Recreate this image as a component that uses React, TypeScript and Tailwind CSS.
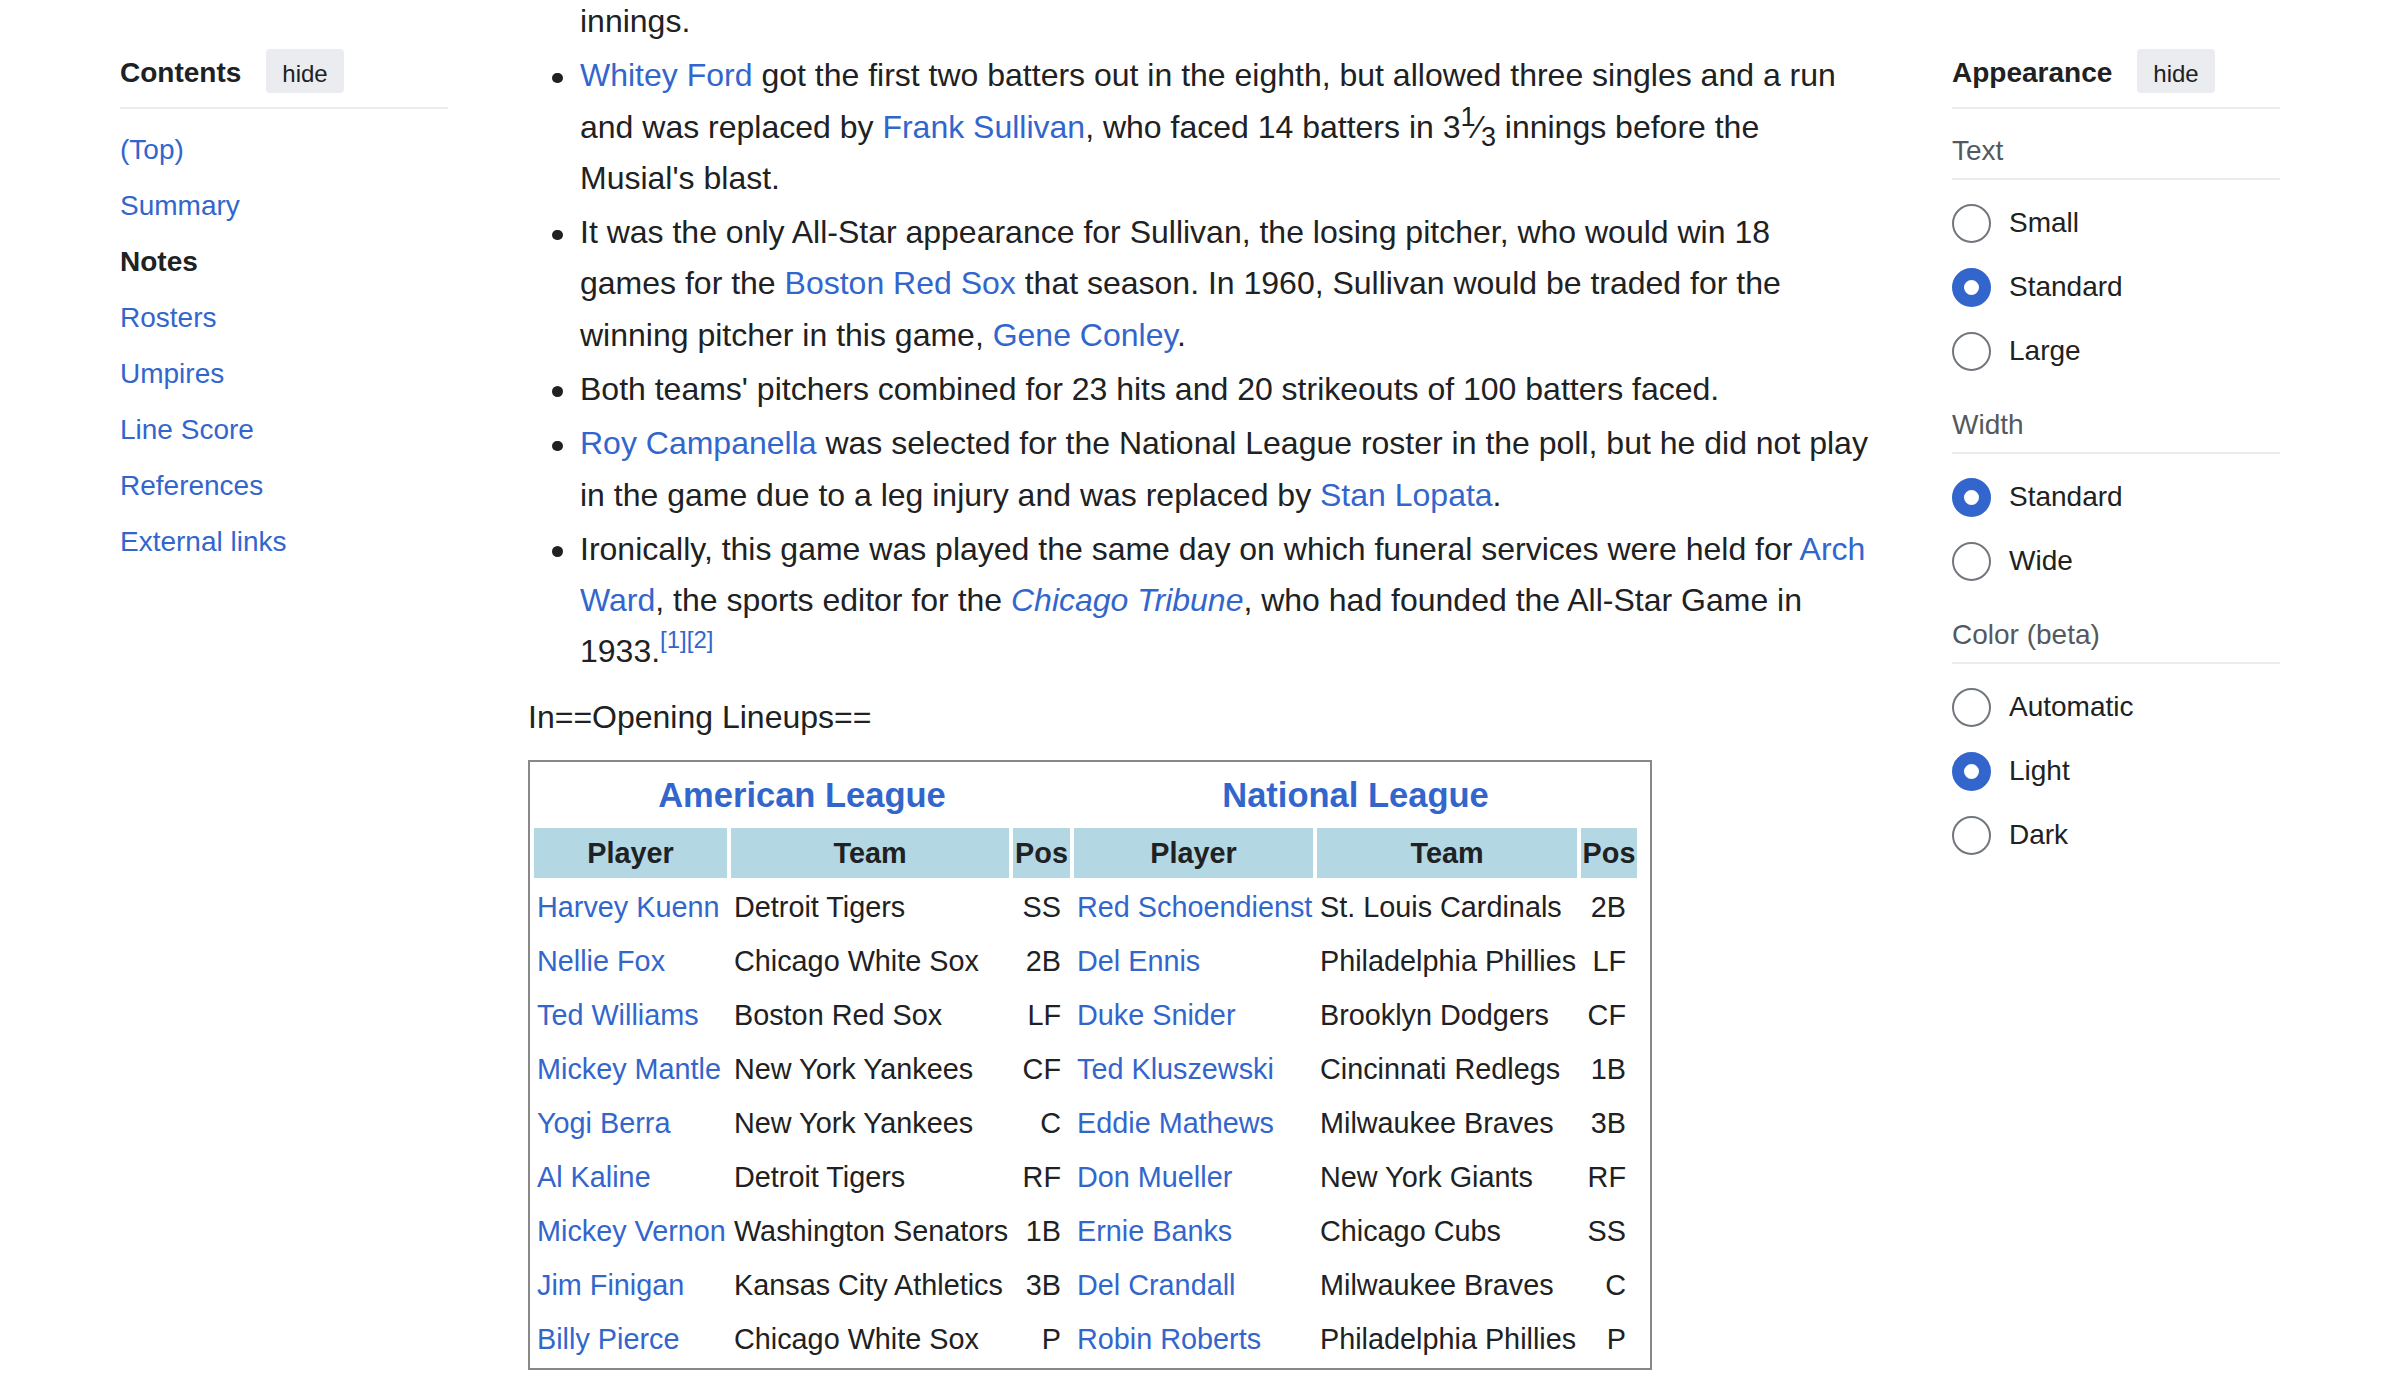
import React from 'react';

const FONT = "font-['Liberation_Sans',Arial,Helvetica,sans-serif]";

const AL = [
  ['Harvey Kuenn', 'Detroit Tigers', 'SS'],
  ['Nellie Fox', 'Chicago White Sox', '2B'],
  ['Ted Williams', 'Boston Red Sox', 'LF'],
  ['Mickey Mantle', 'New York Yankees', 'CF'],
  ['Yogi Berra', 'New York Yankees', 'C'],
  ['Al Kaline', 'Detroit Tigers', 'RF'],
  ['Mickey Vernon', 'Washington Senators', '1B'],
  ['Jim Finigan', 'Kansas City Athletics', '3B'],
  ['Billy Pierce', 'Chicago White Sox', 'P'],
];

const NL = [
  ['Red Schoendienst', 'St. Louis Cardinals', '2B'],
  ['Del Ennis', 'Philadelphia Phillies', 'LF'],
  ['Duke Snider', 'Brooklyn Dodgers', 'CF'],
  ['Ted Kluszewski', 'Cincinnati Redlegs', '1B'],
  ['Eddie Mathews', 'Milwaukee Braves', '3B'],
  ['Don Mueller', 'New York Giants', 'RF'],
  ['Ernie Banks', 'Chicago Cubs', 'SS'],
  ['Del Crandall', 'Milwaukee Braves', 'C'],
  ['Robin Roberts', 'Philadelphia Phillies', 'P'],
];

const TOC = ['(Top)', 'Summary', 'Notes', 'Rosters', 'Umpires', 'Line Score', 'References', 'External links'];

const APPEARANCE = [
  { label: 'Text', options: ['Small', 'Standard', 'Large'], checked: 'Standard' },
  { label: 'Width', options: ['Standard', 'Wide'], checked: 'Standard' },
  { label: 'Color (beta)', options: ['Automatic', 'Light', 'Dark'], checked: 'Light' },
];

function A({ children }: { children: React.ReactNode }) {
  return (
    <a href="#" className="text-[#3366cc]">
      {children}
    </a>
  );
}

function Li({ children }: { children: React.ReactNode }) {
  return (
    <li className="flex mb-[3.2px]">
      <span className="shrink-0 w-[52px] pl-[24px] pt-[22.5px]">
        <span className="block w-[10.5px] h-[10.5px] rounded-full bg-[#202122]" />
      </span>
      <span className="whitespace-nowrap">{children}</span>
    </li>
  );
}

function PanelHeader({ title }: { title: string }) {
  return (
    <>
      <div className="flex items-center h-[44px]">
        <span className="text-[28px] font-bold leading-[44px] pt-[4px]">{title}</span>
        <div className="ml-[25px] h-[44px] px-[16px] pt-[3px] rounded-[4px] bg-[#eaecf0] text-[24px] leading-[44px]">
          hide
        </div>
      </div>
      <div className="mt-[14px] h-[2px] bg-[#eaecf0]" />
    </>
  );
}

function Radio({ on }: { on: boolean }) {
  return on ? (
    <span className="block w-[39px] h-[39px] rounded-full border-[12px] border-[#3366cc] bg-white" />
  ) : (
    <span className="block w-[39px] h-[39px] rounded-full border-2 border-[#72777d] bg-white" />
  );
}

export default function App() {
  return (
    <div className={`${FONT} w-[2400px] h-[1398px] overflow-hidden bg-white text-[#202122] flex`}>
      {/* Contents */}
      <aside className="w-[328px] ml-[120px] pt-[49px] shrink-0">
        <PanelHeader title="Contents" />
        <ul className="mt-[13px] text-[28px] leading-[56px]">
          {TOC.map((t) => (
            <li key={t}>{t === 'Notes' ? <span className="font-bold">{t}</span> : <A>{t}</A>}</li>
          ))}
        </ul>
      </aside>

      {/* Article */}
      <main className="w-[1344px] ml-[80px] mt-[-4px] shrink-0 text-[32px] leading-[51.2px]">
        <div className="pl-[52px] mb-[3.2px]">innings.</div>
        <ul>
          <Li>
            <A>Whitey Ford</A> got the first two batters out in the eighth, but allowed three singles and a run
            <br />
            and was replaced by <A>Frank Sullivan</A>, who faced 14 batters in 3
            <span className="text-[27px] leading-none align-[12px]">1</span>⁄
            <span className="text-[27px] leading-none align-[-8px]">3</span> innings before the
            <br />
            Musial's blast.
          </Li>
          <Li>
            It was the only All-Star appearance for Sullivan, the losing pitcher, who would win 18
            <br />
            games for the <A>Boston Red Sox</A> that season. In 1960, Sullivan would be traded for the
            <br />
            winning pitcher in this game, <A>Gene Conley</A>.
          </Li>
          <Li>Both teams' pitchers combined for 23 hits and 20 strikeouts of 100 batters faced.</Li>
          <Li>
            <A>Roy Campanella</A> was selected for the National League roster in the poll, but he did not play
            <br />
            in the game due to a leg injury and was replaced by <A>Stan Lopata</A>.
          </Li>
          <Li>
            Ironically, this game was played the same day on which funeral services were held for <A>Arch</A>
            <br />
            <A>Ward</A>, the sports editor for the{' '}
            <A>
              <i>Chicago Tribune</i>
            </A>
            , who had founded the All-Star Game in
            <br />
            1933.
            <span className="text-[24px] leading-none align-[14px] text-[#3366cc]">[1][2]</span>
          </Li>
        </ul>
        <p className="mt-[14.5px]">In==Opening Lineups==</p>

        <div className="mt-[17px] w-[1124px] border-2 border-[#888888]">
          <table className="table-fixed border-separate border-spacing-[4px] w-[1111px] text-[28.8px] leading-[32px]">
            <colgroup>
              <col className="w-[193px]" />
              <col className="w-[278px]" />
              <col className="w-[57px]" />
              <col className="w-[239px]" />
              <col className="w-[260px]" />
              <col className="w-[56px]" />
            </colgroup>
            <tbody>
              <tr>
                <td colSpan={3} className="h-[58px] p-0 text-center font-bold text-[34.5px] text-[#3366cc]">
                  American League
                </td>
                <td colSpan={3} className="h-[58px] p-0 text-center font-bold text-[34.5px] text-[#3366cc]">
                  National League
                </td>
              </tr>
              <tr>
                {['Player', 'Team', 'Pos', 'Player', 'Team', 'Pos'].map((h, i) => (
                  <th key={i} className="h-[50px] p-0 bg-[#b3d7e3] font-bold text-center">
                    {h}
                  </th>
                ))}
              </tr>
              {AL.map((a, i) => {
                const n = NL[i];
                return (
                  <tr key={a[0]}>
                    <td className="h-[50px] p-0 pl-[3px] whitespace-nowrap">
                      <A>{a[0]}</A>
                    </td>
                    <td className="p-0 pl-[3px] whitespace-nowrap">{a[1]}</td>
                    <td className="p-0 pr-[9px] text-right">{a[2]}</td>
                    <td className="p-0 pl-[3px] whitespace-nowrap">
                      <A>{n[0]}</A>
                    </td>
                    <td className="p-0 pl-[3px] whitespace-nowrap">{n[1]}</td>
                    <td className="p-0 pr-[11px] text-right">{n[2]}</td>
                  </tr>
                );
              })}
            </tbody>
          </table>
        </div>
      </main>

      {/* Appearance */}
      <aside className="w-[328px] ml-[80px] pt-[49px] shrink-0">
        <PanelHeader title="Appearance" />
        {APPEARANCE.map((s) => (
          <section key={s.label}>
            <div className="mt-[22px] text-[28px] leading-[40px] text-[#54595d]">{s.label}</div>
            <div className="mt-[7px] h-[2px] bg-[#eaecf0]" />
            <div className="mt-[11px]">
              {s.options.map((o) => (
                <div key={o} className="flex items-center h-[64px]">
                  <Radio on={o === s.checked} />
                  <span className="ml-[18px] text-[28px]">{o}</span>
                </div>
              ))}
            </div>
          </section>
        ))}
      </aside>
    </div>
  );
}
